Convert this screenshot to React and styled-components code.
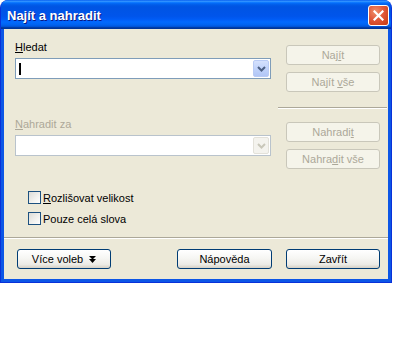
import React from 'react';
import styled, { createGlobalStyle } from 'styled-components';

const GlobalStyle = createGlobalStyle`
  html, body {
    margin: 0;
    padding: 0;
    background: #ffffff;
  }
  body {
    font-family: "Liberation Sans", Arial, sans-serif;
    font-size: 11px;
    color: #000;
  }
`;

const Window = styled.div`
  width: 392px;
  height: 283px;
  box-sizing: border-box;
  display: flex;
  flex-direction: column;
  border: 1px solid #0831d9;
  border-top: none;
  border-radius: 8px 8px 0 0;
  overflow: hidden;
  background: #0c56e6;
`;

const TitleBar = styled.div`
  height: 29px;
  flex: none;
  display: flex;
  align-items: center;
  justify-content: space-between;
  padding: 1px 2px 0 6px;
  box-sizing: border-box;
  background: linear-gradient(
    to bottom,
    #0058ee 0%,
    #3593ff 4%,
    #288eff 6%,
    #127dff 8%,
    #036ffc 10%,
    #0262ee 14%,
    #0057e5 20%,
    #0054e3 24%,
    #0055eb 56%,
    #005bf5 66%,
    #026afe 76%,
    #0062ef 86%,
    #0052d6 92%,
    #0040ab 94%,
    #003092 100%
  );
`;

const TitleText = styled.span`
  color: #fff;
  font: bold 13px "Liberation Sans", Arial, sans-serif;
  text-shadow: 1px 1px #0a1883;
`;

const CloseButton = styled.div`
  width: 21px;
  height: 21px;
  box-sizing: border-box;
  border: 1px solid #fff;
  border-radius: 3px;
  display: flex;
  align-items: center;
  justify-content: center;
  background: radial-gradient(circle at 35% 30%, #f0906b 0%, #e0583a 45%, #c4390f 100%);
`;

const Client = styled.div`
  flex: 1;
  margin: 0 3px 3px;
  background: #ece9d8;
  display: flex;
  flex-direction: column;
`;

const Main = styled.div`
  display: flex;
  padding: 12px 0 0 11px;
`;

const LeftCol = styled.div`
  width: 256px;
  display: flex;
  flex-direction: column;
`;

const RightCol = styled.div`
  width: 110px;
  margin-left: 7px;
  display: flex;
  flex-direction: column;
  padding-top: 4px;
`;

const Label = styled.div`
  line-height: 13px;
  height: 13px;
  margin-top: ${p => p.$top || 0}px;
  color: ${p => (p.$disabled ? '#aca899' : '#000')};
`;

const Key = styled.span`
  text-decoration: underline;
  text-underline-offset: 1px;
`;

const Combo = styled.div`
  margin-top: 4px;
  height: 21px;
  box-sizing: border-box;
  border: 1px solid ${p => (p.$disabled ? '#b9c3cc' : '#7f9db9')};
  background: #fff;
  display: flex;
  align-items: center;
  padding: 1px;
`;

const Caret = styled.span`
  width: 2px;
  height: 12px;
  margin-left: 2px;
  background: #000;
`;

const DropButton = styled.div`
  margin-left: auto;
  width: 16px;
  height: 17px;
  box-sizing: border-box;
  border: 1px solid ${p => (p.$disabled ? '#e3e1d9' : '#b9cbf5')};
  border-radius: 2px;
  display: flex;
  align-items: center;
  justify-content: center;
  background: ${p =>
    p.$disabled
      ? '#f4f3ee'
      : 'linear-gradient(to bottom, #d5e1fd 0%, #c1d3fb 50%, #b1c6f6 100%)'};
`;

const Checks = styled.div`
  margin-top: 35px;
  padding-left: 13px;
  display: flex;
  flex-direction: column;
  gap: 8px;
`;

const CheckRow = styled.label`
  display: flex;
  align-items: center;
  gap: 2px;
  height: 13px;
`;

const CheckBox = styled.span`
  width: 13px;
  height: 13px;
  box-sizing: border-box;
  border: 1px solid #1c5180;
  background: linear-gradient(135deg, #dcdcd7 0%, #f2f2ef 60%, #ffffff 100%);
`;

const Button = styled.button`
  width: ${p => p.$w || 94}px;
  height: 20px;
  margin-left: ${p => (p.$inset ? 8 : 0)}px;
  margin-top: ${p => p.$top || 0}px;
  padding: 0;
  box-sizing: border-box;
  border: 1px solid ${p => (p.disabled ? '#c9c7ba' : '#003c74')};
  border-radius: 3px;
  background: ${p =>
    p.disabled
      ? '#f5f4ea'
      : 'linear-gradient(to bottom, #ffffff 0%, #f6f6f3 45%, #ecebe6 80%, #d6d0c5 100%)'};
  color: ${p => (p.disabled ? '#aca899' : '#000')};
  font: 11px "Liberation Sans", Arial, sans-serif;
  display: flex;
  align-items: center;
  justify-content: center;
  gap: 6px;
`;

const RuleRight = styled.div`
  margin-top: 15px;
  height: 1px;
  width: 109px;
  background: #aca899;
  border-bottom: 1px solid #fff;
`;

const Footer = styled.div`
  margin-top: auto;
  display: flex;
  flex-direction: column;
`;

const Rule = styled.div`
  height: 1px;
  background: #aca899;
  border-bottom: 1px solid #fff;
`;

const ButtonRow = styled.div`
  display: flex;
  gap: 14px;
  padding: 10px 8px 10px 13px;
  & > :first-child {
    margin-right: auto;
  }
`;

const Chevron = ({ disabled }) => (
  <svg width="9" height="6" viewBox="0 0 9 6">
    <path
      d="M1 1 L4.5 4.5 L8 1"
      fill="none"
      stroke={disabled ? '#c9c7ba' : '#4d6185'}
      strokeWidth="2"
    />
  </svg>
);

const DoubleArrow = () => (
  <svg width="7" height="7" viewBox="0 0 7 7">
    <path d="M0 0 H7 L3.5 3.5 Z M0 3 H7 L3.5 7 Z" fill="#000" />
  </svg>
);

const CloseX = () => (
  <svg width="11" height="11" viewBox="0 0 11 11">
    <path d="M1.5 1.5 L9.5 9.5 M9.5 1.5 L1.5 9.5" stroke="#fff" strokeWidth="2.2" strokeLinecap="square" />
  </svg>
);

export default function App() {
  return (
    <>
      <GlobalStyle />
      <Window>
        <TitleBar>
          <TitleText>Najít a nahradit</TitleText>
          <CloseButton>
            <CloseX />
          </CloseButton>
        </TitleBar>
        <Client>
          <Main>
            <LeftCol>
              <Label>
                <Key>H</Key>ledat
              </Label>
              <Combo>
                <Caret />
                <DropButton>
                  <Chevron />
                </DropButton>
              </Combo>
              <Label $top={39} $disabled>
                <Key>N</Key>ahradit za
              </Label>
              <Combo $disabled>
                <DropButton $disabled>
                  <Chevron disabled />
                </DropButton>
              </Combo>
              <Checks>
                <CheckRow>
                  <CheckBox />
                  <span>
                    <Key>R</Key>ozlišovat velikost
                  </span>
                </CheckRow>
                <CheckRow>
                  <CheckBox />
                  <span>Pouze celá slova</span>
                </CheckRow>
              </Checks>
            </LeftCol>
            <RightCol>
              <Button disabled $inset>
                <span>
                  Naj<Key>í</Key>t
                </span>
              </Button>
              <Button disabled $inset $top={7}>
                <span>
                  Najít <Key>v</Key>še
                </span>
              </Button>
              <RuleRight />
              <Button disabled $inset $top={13}>
                <span>
                  Nahradi<Key>t</Key>
                </span>
              </Button>
              <Button disabled $inset $top={7}>
                <span>
                  Nahra<Key>d</Key>it vše
                </span>
              </Button>
            </RightCol>
          </Main>
          <Footer>
            <Rule />
            <ButtonRow>
              <Button>
                <span>Více voleb</span>
                <DoubleArrow />
              </Button>
              <Button $w={95}>Nápověda</Button>
              <Button>Zavřít</Button>
            </ButtonRow>
          </Footer>
        </Client>
      </Window>
    </>
  );
}
